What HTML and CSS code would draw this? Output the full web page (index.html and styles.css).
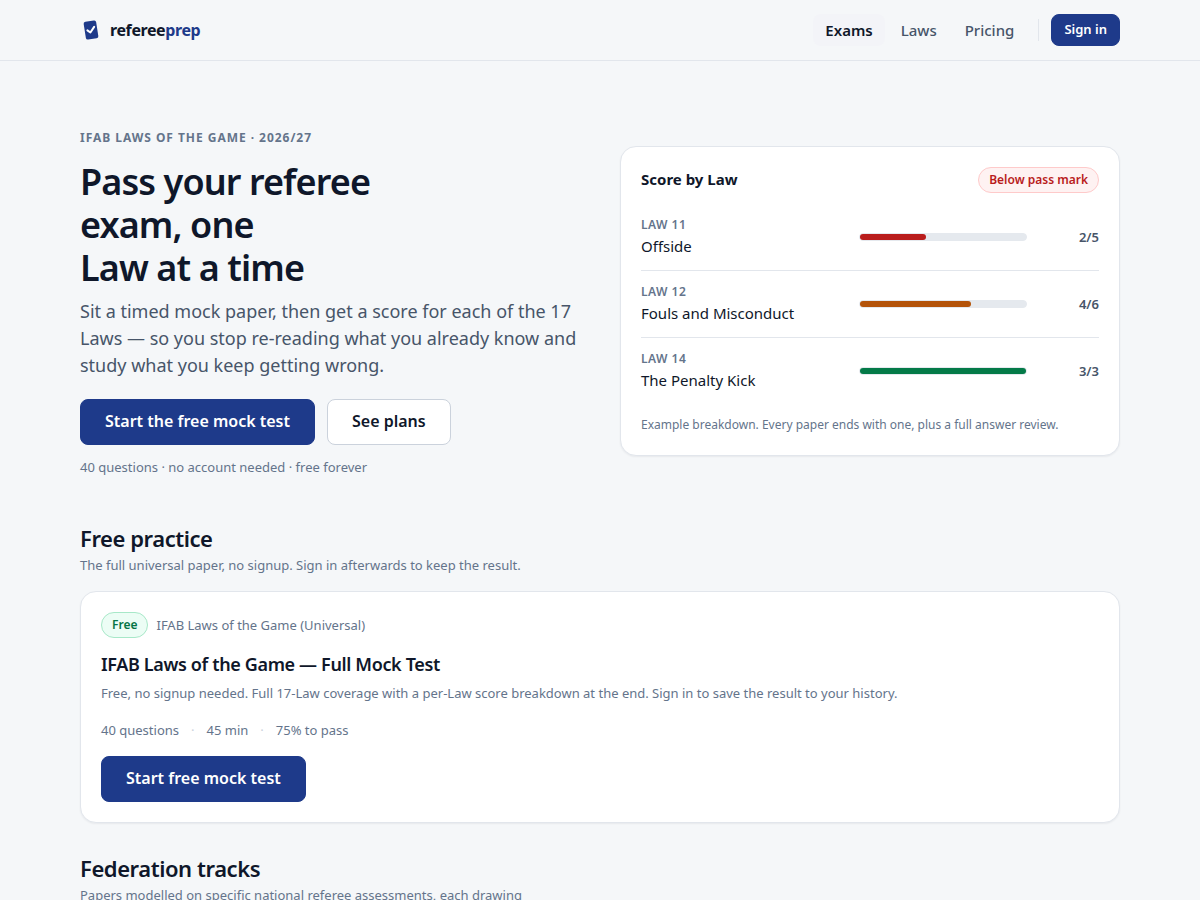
FILE: index.html
```html
<!DOCTYPE html>
<html lang="en">
<head>
  <meta charset="utf-8">
  <meta name="viewport" content="width=device-width, initial-scale=1">
  <title>refereeprep</title>
  <link rel="stylesheet" href="styles.css">
</head>
<body>
  <header class="site-header">
    <div class="container header-inner">
      <a class="brand" href="#">
        <svg class="brand-mark" viewBox="0 0 22 22" aria-hidden="true">
          <g transform="rotate(-9 11 11)">
            <rect x="4.7" y="2" width="12.6" height="18" rx="2" fill="#1e3a8a"/>
            <path d="M7.4 10.8l2.6 2.6 4.6-5" fill="none" stroke="#fff" stroke-width="2" stroke-linecap="round" stroke-linejoin="round"/>
          </g>
        </svg>
        <span class="brand-name">referee<span class="brand-accent">prep</span></span>
      </a>
      <nav class="nav">
        <a class="nav-link active" href="#">Exams</a>
        <a class="nav-link" href="#">Laws</a>
        <a class="nav-link" href="#">Pricing</a>
        <span class="nav-divider"></span>
        <button type="button" class="btn btn-primary btn-small">Sign in</button>
      </nav>
    </div>
  </header>

  <main class="container">
    <section class="hero">
      <div class="hero-text">
        <p class="eyebrow">IFAB Laws of the Game · 2026/27</p>
        <h1>Pass your referee<br>exam, one<br>Law at a time</h1>
        <p class="lead">Sit a timed mock paper, then get a score for each of the 17 Laws — so you stop re-reading what you already know and study what you keep getting wrong.</p>
        <div class="actions">
          <button type="button" class="btn btn-primary">Start the free mock test</button>
          <button type="button" class="btn btn-secondary">See plans</button>
        </div>
        <p class="small">40 questions · no account needed · free forever</p>
      </div>

      <div class="card">
        <div class="score-head">
          <h2 class="score-title">Score by Law</h2>
          <span class="pill pill-fail">Below pass mark</span>
        </div>
        <ul class="score-list">
          <li class="score-row">
            <div>
              <div class="law-number">LAW 11</div>
              <div class="law-name">Offside</div>
            </div>
            <div class="bar"><div class="bar-fill low" style="width: 40%"></div></div>
            <div class="score">2/5</div>
          </li>
          <li class="score-row">
            <div>
              <div class="law-number">LAW 12</div>
              <div class="law-name">Fouls and Misconduct</div>
            </div>
            <div class="bar"><div class="bar-fill mid" style="width: 67%"></div></div>
            <div class="score">4/6</div>
          </li>
          <li class="score-row">
            <div>
              <div class="law-number">LAW 14</div>
              <div class="law-name">The Penalty Kick</div>
            </div>
            <div class="bar"><div class="bar-fill high" style="width: 100%"></div></div>
            <div class="score">3/3</div>
          </li>
        </ul>
        <p class="score-note">Example breakdown. Every paper ends with one, plus a full answer review.</p>
      </div>
    </section>

    <section class="section">
      <h2>Free practice</h2>
      <p class="small section-intro">The full universal paper, no signup. Sign in afterwards to keep the result.</p>
      <article class="card">
        <div class="exam-tags">
          <span class="pill pill-free">Free</span>
          <span class="small">IFAB Laws of the Game (Universal)</span>
        </div>
        <h3>IFAB Laws of the Game — Full Mock Test</h3>
        <p class="small">Free, no signup needed. Full 17-Law coverage with a per-Law score breakdown at the end. Sign in to save the result to your history.</p>
        <div class="small exam-meta">
          <span>40 questions</span>
          <span class="dot">·</span>
          <span>45 min</span>
          <span class="dot">·</span>
          <span>75% to pass</span>
        </div>
        <button type="button" class="btn btn-primary">Start free mock test</button>
      </article>
    </section>

    <section class="section">
      <h2>Federation tracks</h2>
      <p class="small section-intro">Papers modelled on specific national referee assessments, each drawing</p>
    </section>
  </main>
</body>
</html>
```

FILE: styles.css
```css
* {
  box-sizing: border-box;
}

body {
  margin: 0;
  background: #f5f7f9;
  color: #0f172a;
  font-family: "Noto Sans", sans-serif;
  font-size: 15px;
  line-height: 22px;
}

h1, h2, h3, p, ul {
  margin: 0;
  padding: 0;
}

a {
  color: inherit;
  text-decoration: none;
}

.container {
  max-width: 1120px;
  margin: 0 auto;
  padding: 0 40px;
}

/* Header */
.site-header {
  border-bottom: 1px solid #e2e6ec;
}

.header-inner {
  display: flex;
  align-items: center;
  justify-content: space-between;
  height: 60px;
}

.brand {
  display: flex;
  align-items: center;
  gap: 8px;
}

.brand-mark {
  width: 22px;
  height: 22px;
}

.brand-name {
  font-size: 16px;
  font-weight: 700;
  letter-spacing: -0.025em;
}

.brand-accent {
  color: #1e3a8a;
}

.nav {
  display: flex;
  align-items: center;
  gap: 4px;
}

.nav-link {
  padding: 5px 12px;
  border-radius: 8px;
  color: #475569;
  font-weight: 500;
}

.nav-link.active {
  background: #f3f4f8;
  color: #0f172a;
  font-weight: 600;
}

.nav-divider {
  width: 1px;
  height: 22px;
  margin: 0 8px;
  background: #e2e6ec;
}

/* Buttons */
.btn {
  padding: 9px 24px 11px;
  border: 1px solid transparent;
  border-radius: 8px;
  font-family: inherit;
  font-size: 16px;
  font-weight: 600;
  line-height: 24px;
  cursor: pointer;
}

.btn-primary {
  background: #1e3a8a;
  border-color: #1e3a8a;
  color: #fff;
}

.btn-secondary {
  background: #fff;
  border-color: #cbd2dc;
  color: #0f172a;
}

.btn-small {
  padding: 4px 12px 6px;
  font-size: 13px;
  line-height: 20px;
}

/* Hero */
.hero {
  display: grid;
  grid-template-columns: 1fr 1fr;
  gap: 40px;
  align-items: center;
  padding: 64px 0 46px;
}

.eyebrow {
  margin: 4px 0 13px;
  color: #64748b;
  font-size: 12px;
  font-weight: 700;
  line-height: 18px;
  letter-spacing: 0.08em;
  text-transform: uppercase;
}

h1 {
  margin-bottom: 9px;
  font-size: 36px;
  font-weight: 600;
  line-height: 43px;
  letter-spacing: -0.025em;
}

.lead {
  color: #475569;
  font-size: 18px;
  line-height: 27px;
}

.actions {
  display: flex;
  flex-wrap: wrap;
  gap: 12px;
  margin: 20px 0 12px;
}

.small {
  color: #64748b;
  font-size: 13px;
  line-height: 20px;
}

/* Cards */
.card {
  padding: 20px;
  background: #fff;
  border: 1px solid #e2e6ec;
  border-radius: 16px;
  box-shadow: 0 1px 2px rgba(15, 23, 42, 0.06);
}

.pill {
  padding: 3px 10px;
  border: 1px solid;
  border-radius: 13px;
  font-size: 12px;
  font-weight: 600;
  line-height: 18px;
}

.pill-fail {
  background: #fef2f2;
  border-color: #fecaca;
  color: #b91c1c;
}

.pill-free {
  background: #ecfdf5;
  border-color: #a7e8c8;
  color: #047445;
}

/* Score breakdown */
.score-head {
  display: flex;
  align-items: flex-start;
  justify-content: space-between;
  margin-bottom: 11px;
}

.score-title {
  font-size: 15px;
  font-weight: 700;
  line-height: 24px;
}

.score-list {
  list-style: none;
}

.score-row {
  display: grid;
  grid-template-columns: 6fr 5fr 56px;
  gap: 16px;
  align-items: center;
  padding: 12px 0;
}

.score-row + .score-row {
  border-top: 1px solid #e2e6ec;
}

.law-number {
  color: #64748b;
  font-size: 12px;
  font-weight: 600;
  line-height: 18px;
  letter-spacing: 0.04em;
}

.law-name {
  line-height: 24px;
}

.bar {
  height: 8px;
  border: 1px solid #e5e9ee;
  border-radius: 4px;
  background: #e5e9ee;
}

.bar-fill {
  height: 6px;
  border-radius: 3px;
}

.low {
  background: #b91c1c;
}

.mid {
  background: #b45309;
}

.high {
  background: #047a48;
}

.score {
  color: #475569;
  font-size: 13px;
  font-weight: 600;
  text-align: right;
}

.score-note {
  margin-top: 11px;
  color: #64748b;
  font-size: 12px;
  line-height: 20px;
}

/* Exam sections */
.section {
  margin-bottom: 30px;
}

.section h2 {
  margin-bottom: 2px;
  font-size: 22px;
  font-weight: 600;
  line-height: 30px;
  letter-spacing: -0.02em;
}

.section-intro {
  margin-bottom: 16px;
}

.exam-tags {
  display: flex;
  align-items: center;
  gap: 8px;
  margin-bottom: 13px;
}

h3 {
  margin-bottom: 5px;
  font-size: 18px;
  font-weight: 600;
  line-height: 27px;
  letter-spacing: -0.02em;
}

.exam-meta {
  display: flex;
  gap: 12px;
  margin: 17px 0 16px;
}

.dot {
  color: #cbd2dc;
}
```
